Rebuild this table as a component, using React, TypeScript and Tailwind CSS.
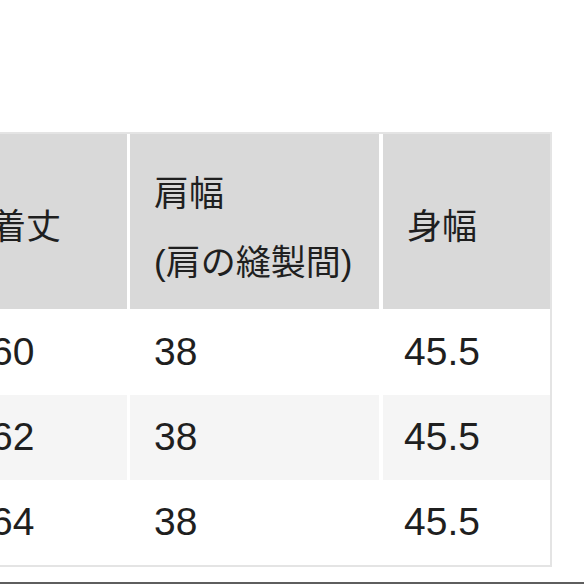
const fontStack = "[font-family:'Liberation_Sans','Noto_Sans_CJK_JP',sans-serif]";

const rows = [
  { length: "60", shoulder: "38", width: "45.5" },
  { length: "62", shoulder: "38", width: "45.5" },
  { length: "64", shoulder: "38", width: "45.5" },
];

const headCell = "flex items-center bg-[#d9d9d9] pl-6 pt-3 text-[35px] text-[#1f1f1f]";
const bodyCell = "flex items-center pl-6 text-[39px] text-[#1f1f1f]";

export default function App() {
  return (
    <div className={`relative h-[584px] w-[584px] overflow-hidden bg-white ${fontStack}`}>
      <div className="pt-[132px]">
        <div className="ml-[-35px] w-max border-2 border-[#e4e4e4]">
          <div className="grid grid-cols-[160px_250px_167px] gap-x-[3px] bg-white">
            <div className={`${headCell} h-[175px]`}>
              <span>着丈</span>
            </div>
            <div className={`${headCell} mr-[1px] h-[175px]`}>
              <div className="flex flex-col leading-[69px]">
                <span>肩幅</span>
                <span>(肩の縫製間)</span>
              </div>
            </div>
            <div className={`${headCell} h-[175px]`}>
              <span>身幅</span>
            </div>

            {rows.map((r, i) => {
              const bg = i % 2 === 1 ? "bg-[#f5f5f5]" : "bg-white";
              const h = i === 0 ? "h-[86px]" : "h-[85px]";
              return [
                <div key={`a${i}`} className={`${bodyCell} ${bg} ${h}`}>{r.length}</div>,
                <div key={`b${i}`} className={`${bodyCell} ${bg} ${h} mr-[1px]`}>{r.shoulder}</div>,
                <div key={`c${i}`} className={`${bodyCell} ${bg} ${h} pl-[21px]`}>{r.width}</div>,
              ];
            })}
          </div>
        </div>
      </div>
      <div className="absolute bottom-0 left-0 h-[2px] w-full bg-[#5e5e5e]" />
    </div>
  );
}
